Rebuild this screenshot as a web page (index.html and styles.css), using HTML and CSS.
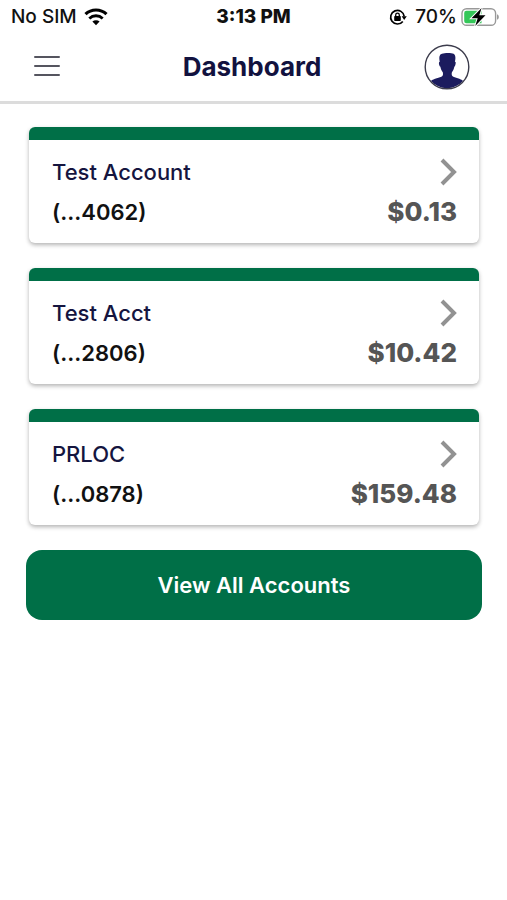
FILE: index.html
```
<!DOCTYPE html>
<html lang="en">
<head>
    <meta charset="UTF-8">
    <meta name="viewport" content="width=device-width, initial-scale=1.0">
    <title>Dashboard</title>
    <link rel="stylesheet" href="styles.css">
</head>
<body>

<div class="status-bar">
    <div class="status-left">
        <span>No SIM</span>
        <svg class="wifi" width="24" height="18" viewBox="0 0 24 18" aria-hidden="true">
            <path d="M1.5 6.2a15.2 15.2 0 0 1 21 0" fill="none" stroke="#000" stroke-width="3.2"/>
            <path d="M5.3 10.4a9.8 9.8 0 0 1 13.4 0" fill="none" stroke="#000" stroke-width="2.8"/>
            <path d="M12 17.3l-3.6-3.7a5.2 5.2 0 0 1 7.2 0z"/>
        </svg>
    </div>
    <div class="status-time">3:13 PM</div>
    <div class="status-right">
        <svg width="18" height="18" viewBox="0 0 18 18" aria-hidden="true">
            <path d="M13.8 13.4A6.8 6.8 0 1 1 15.2 8.4" fill="none" stroke="#000" stroke-width="1.7"/>
            <path d="M12.6 8.2h5.2l-2.6 3.8z"/>
            <rect x="5.2" y="8" width="6.6" height="5" rx="0.8"/>
            <path d="M6.7 8.2V7a1.8 1.8 0 0 1 3.6 0v1.2" fill="none" stroke="#000" stroke-width="1.3"/>
        </svg>
        <span class="percent">70%</span>
        <svg width="38" height="20" viewBox="0 0 38 20" aria-hidden="true">
            <rect x="1" y="1.7" width="33.6" height="16.6" rx="4.6" fill="#fff" stroke="#999" stroke-width="1.4"/>
            <path d="M36 7.2c2.4.8 2.4 4.8 0 5.6z" fill="#999"/>
            <path d="M5.5 3.8h15v12.4h-15a2.3 2.3 0 0 1-2.3-2.3V6.1a2.3 2.3 0 0 1 2.3-2.3z" fill="#35c759"/>
            <path d="M20.6 1L10.500 11.3h6.2l-2.5 7.700L24.500 8.300h-6.200z" fill="#000" stroke="#fff" stroke-width="2" paint-order="stroke"/>
        </svg>
    </div>
</div>

<header class="header">
    <button class="icon-button" type="button" aria-label="Menu">
        <svg width="26" height="22" viewBox="0 0 26 22" aria-hidden="true">
            <path d="M1 1h24M1 10h24M1 19h24" stroke="#55555f" stroke-width="2" stroke-linecap="round"/>
        </svg>
    </button>
    <h1>Dashboard</h1>
    <button class="icon-button" type="button" aria-label="Profile">
        <svg width="46" height="46" viewBox="0 0 46 46" aria-hidden="true">
            <path d="M7 37C9.5 34.5 16 34.3 18.4 32.1C19.3 31.1 19 29.3 18.8 28.2C17.6 26.8 16.7 24.8 16.4 22.8C15.2 22.3 14.6 19.5 15.1 18.2C15.3 17.7 15.6 17.7 15.8 17.7C15.3 15.8 14.9 12.8 16 11.2C16.5 10.3 17.2 10 18 9.8C20.500 8.6 27.6 8.6 29.6 9.8C31.8 10.900 31.700 14.800 30.900 17.700C31.600 17.600 31.800 18.300 31.700 19.100C31.500 20.800 31.200 22.300 30.300 22.800C30 24.800 29.100 26.800 27.900 28.200C27.700 29.300 27.400 31.100 28.300 32.100C30.700 34.300 37 34.500 39 37A21.500 21.500 0 0 1 7 37Z" fill="#1b1b5e"/>
            <circle cx="23" cy="23" r="21.8" fill="none" stroke="#3c3c4c" stroke-width="1.4"/>
        </svg>
    </button>
</header>

<main class="content">
    <a class="account" href="#">
        <span class="account-name">Test Account</span>
        <svg class="chevron" width="18" height="28" viewBox="0 0 18 28" aria-hidden="true"><path d="M3 2l12 12L3 26"/></svg>
        <span class="account-number">(...4062)</span>
        <span class="account-balance">$0.13</span>
    </a>
    <a class="account" href="#">
        <span class="account-name">Test Acct</span>
        <svg class="chevron" width="18" height="28" viewBox="0 0 18 28" aria-hidden="true"><path d="M3 2l12 12L3 26"/></svg>
        <span class="account-number">(...2806)</span>
        <span class="account-balance">$10.42</span>
    </a>
    <a class="account" href="#">
        <span class="account-name">PRLOC</span>
        <svg class="chevron" width="18" height="28" viewBox="0 0 18 28" aria-hidden="true"><path d="M3 2l12 12L3 26"/></svg>
        <span class="account-number">(...0878)</span>
        <span class="account-balance">$159.48</span>
    </a>
    <button class="view-all" type="button">View All Accounts</button>
</main>

</body>
</html>
```
FILE: styles.css
```
* {
    box-sizing: border-box;
}

body {
    margin: 0;
    font-family: Inter, "Liberation Sans", sans-serif;
    background-color: #fff;
    color: #111;
}

.status-bar {
    display: grid;
    grid-template-columns: 1fr auto 1fr;
    align-items: center;
    height: 33px;
    padding: 0 8px;
    font-size: 19px;
    font-weight: 500;
}

.status-left,
.status-right {
    display: flex;
    align-items: center;
}

.status-left {
    gap: 7px;
    padding-left: 3px;
}

.status-right {
    justify-content: flex-end;
}

.status-time {
    font-weight: 800;
}

.percent {
    margin: 0 4px 0 8px;
}

.header {
    display: flex;
    justify-content: space-between;
    align-items: center;
    padding: 11px 37px 11px 34px;
    border-bottom: 3px solid #dcdcdc;
}

.header h1 {
    margin: 0;
    font-size: 26px;
    line-height: 32px;
    font-weight: 700;
    color: #12123f;
}

.icon-button {
    display: flex;
    align-items: center;
    width: 46px;
    padding: 0;
    border: none;
    background: none;
    cursor: pointer;
}

.content {
    display: flex;
    flex-direction: column;
    gap: 25px;
    padding: 23px 25px 23px 26px;
}

.account {
    display: grid;
    grid-template-columns: 1fr auto;
    align-items: center;
    row-gap: 8px;
    margin: 0 3px;
    padding: 16px 22px 15px 23px;
    border-top: 13px solid #006f47;
    border-radius: 6px;
    box-shadow: 0 2px 4px rgba(0, 0, 0, 0.3);
    font-size: 22px;
    line-height: 32px;
    font-weight: 500;
    color: #111;
    text-decoration: none;
}

.account-name {
    color: #15153f;
}

.account-number {
    font-weight: 600;
}

.chevron {
    justify-self: end;
    fill: none;
    stroke: #929292;
    stroke-width: 4;
}

.account-balance {
    font-size: 26px;
    font-weight: 800;
    color: #555;
    text-align: right;
}

.view-all {
    height: 70px;
    border: none;
    border-radius: 16px;
    background-color: #006f47;
    color: #fff;
    font-family: inherit;
    font-size: 22px;
    font-weight: 600;
    cursor: pointer;
}
```
